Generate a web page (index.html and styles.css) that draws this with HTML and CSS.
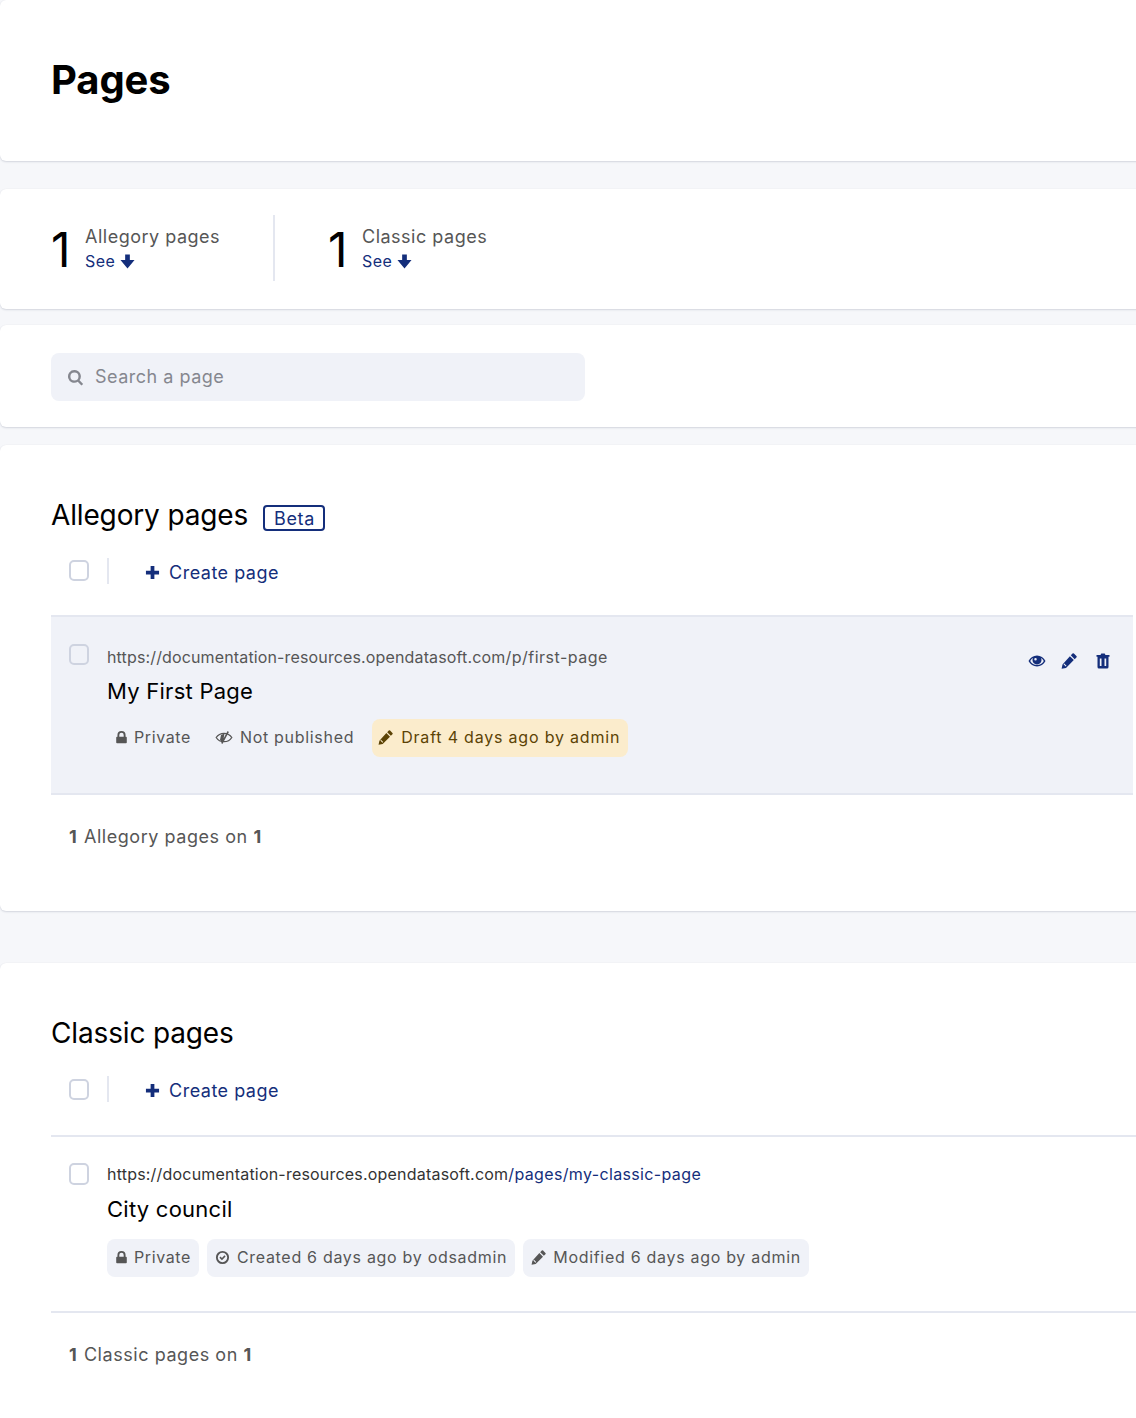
FILE: index.html
```html
<!DOCTYPE html>
<html lang="en">
<head>
    <meta charset="UTF-8">
    <title>Pages</title>
    <link rel="stylesheet" href="styles.css">
</head>
<body>
    <svg class="sprites" width="0" height="0">
        <symbol id="i-down" viewBox="0 0 16 16"><path d="M5.500.5h5v6h5L8 15.500.5 6.500h5z"/></symbol>
        <symbol id="i-plus" viewBox="0 0 16 16"><path d="M6 1h4v5h5v4h-5v5H6v-5H1V6h5z"/></symbol>
        <symbol id="i-search" viewBox="0 0 16 16"><path fill-rule="evenodd" d="M7 1a6 6 0 0 1 4.800 9.600l3.400 3.400-1.600 1.600-3.500-3.500A6 6 0 1 1 7 1zm0 2.200a3.800 3.800 0 1 0 0 7.600 3.800 3.800 0 0 0 0-7.600z"/></symbol>
        <symbol id="i-lock" viewBox="0 0 16 16"><path fill-rule="evenodd" d="M3 7V5a5 5 0 0 1 10 0v2h.5a1 1 0 0 1 1 1v6a1 1 0 0 1-1 1h-11a1 1 0 0 1-1-1V8a1 1 0 0 1 1-1zm2.300 0h5.400V5a2.700 2.700 0 0 0-5.400 0z"/></symbol>
        <symbol id="i-eye" viewBox="0 0 18 14"><path fill-rule="evenodd" d="M9 1.500c3.600 0 6.800 2.200 8.500 5.500-1.700 3.300-4.900 5.500-8.500 5.500S2.200 10.300.5 7C2.200 3.700 5.400 1.500 9 1.500zM5.100 3.700A8 8 0 0 0 2.200 7a7.800 7.800 0 0 0 13.600 0 8 8 0 0 0-2.900-3.300A4.500 4.500 0 1 1 5.100 3.700zM7.500 4a1 1 0 0 0 0 2.500 1.200 1.200 0 0 0 0-2.500z"/></symbol>
        <symbol id="i-eye-off" viewBox="0 0 18 14"><path fill="none" stroke="currentColor" stroke-width="1.300" d="M1.200 7C3 4.200 5.800 2.800 9 2.800s6 1.400 7.800 4.200C15 9.800 12.200 11.200 9 11.200S3 9.800 1.200 7z"/><path d="M6 4.500 9.500 3l-1 5.500-1.500 3-2-2zM12.600.6l1.300.8-6.500 12-1.300-.8z"/></symbol>
        <symbol id="i-pencil" viewBox="0 0 16 16"><path d="M11.500.6a1 1 0 0 1 1.400 0l2.500 2.500a1 1 0 0 1 0 1.400l-1.700 1.700-3.900-3.900zM8.900 3.200l3.900 3.900-7.800 7.800-4.400.9.900-4.400zM2.500 11.200l2.300 2.300.7-.7-2.300-2.300z"/></symbol>
        <symbol id="i-trash" viewBox="0 0 14 16"><path fill-rule="evenodd" d="M4.500 2 5.300.5h3.400L9.500 2H13.500v1.800h-1V14a1.500 1.500 0 0 1-1.500 1.500H3A1.500 1.500 0 0 1 1.500 14V3.800h-1V2zM3.800 5.500v7.500h1.700V5.500zm4.700 0v7.500h1.700V5.500z"/></symbol>
        <symbol id="i-check" viewBox="0 0 16 16"><path fill-rule="evenodd" d="M8 1a7 7 0 1 1 0 14A7 7 0 0 1 8 1zm0 2a5 5 0 1 0 0 10A5 5 0 0 0 8 3z"/><path d="M5.900 7 7.400 8.400 10.100 5.700l1.200 1.200-3.900 3.900L4.700 8.200z"/></symbol>
    </svg>

    <header class="card page-head">
        <h1>Pages</h1>
    </header>

    <section class="card stats">
        <div class="stat stat-first">
            <span class="stat-num">1</span>
            <div>
                <div class="stat-label">Allegory pages</div>
                <a class="stat-link" href="#allegory">See <svg class="icon"><use href="#i-down"/></svg></a>
            </div>
        </div>
        <div class="stat">
            <span class="stat-num">1</span>
            <div>
                <div class="stat-label">Classic pages</div>
                <a class="stat-link" href="#classic">See <svg class="icon"><use href="#i-down"/></svg></a>
            </div>
        </div>
    </section>

    <section class="card search-card">
        <div class="search">
            <svg class="icon"><use href="#i-search"/></svg>
            <span>Search a page</span>
        </div>
    </section>

    <section class="card list list-allegory" id="allegory">
        <div class="list-title">
            <h2>Allegory pages</h2>
            <span class="beta">Beta</span>
        </div>
        <div class="toolbar">
            <span class="checkbox"></span>
            <span class="toolbar-sep"></span>
            <a class="create" href="#"><svg class="icon"><use href="#i-plus"/></svg> Create page</a>
        </div>
        <div class="row row-active">
            <span class="checkbox row-check"></span>
            <div class="row-body">
                <div class="url"><span>https://documentation-resources.opendatasoft.com</span>/p/first-page</div>
                <div class="row-name">My First Page</div>
                <div class="tags">
                    <span class="tag tag-plain tag-private"><svg class="icon icon-lock"><use href="#i-lock"/></svg>Private</span>
                    <span class="tag tag-plain"><svg class="icon icon-wide"><use href="#i-eye-off"/></svg>Not published</span>
                    <span class="tag tag-draft"><svg class="icon"><use href="#i-pencil"/></svg>Draft 4 days ago by admin</span>
                </div>
            </div>
            <div class="row-actions">
                <svg class="icon icon-wide"><use href="#i-eye"/></svg>
                <svg class="icon"><use href="#i-pencil"/></svg>
                <svg class="icon"><use href="#i-trash"/></svg>
            </div>
        </div>
        <div class="count"><b>1</b> Allegory pages on <b>1</b></div>
    </section>

    <section class="card list list-classic" id="classic">
        <div class="list-title">
            <h2>Classic pages</h2>
        </div>
        <div class="toolbar">
            <span class="checkbox"></span>
            <span class="toolbar-sep"></span>
            <a class="create" href="#"><svg class="icon"><use href="#i-plus"/></svg> Create page</a>
        </div>
        <div class="row">
            <span class="checkbox row-check"></span>
            <div class="row-body">
                <div class="url url-dark"><span>https://documentation-resources.opendatasoft.com</span>/pages/my-classic-page</div>
                <div class="row-name">City council</div>
                <div class="tags">
                    <span class="tag tag-private"><svg class="icon icon-lock"><use href="#i-lock"/></svg>Private</span>
                    <span class="tag"><svg class="icon"><use href="#i-check"/></svg>Created 6 days ago by odsadmin</span>
                    <span class="tag"><svg class="icon"><use href="#i-pencil"/></svg>Modified 6 days ago by admin</span>
                </div>
            </div>
        </div>
        <div class="count"><b>1</b> Classic pages on <b>1</b></div>
    </section>
</body>
</html>
```

FILE: styles.css
```css
html, body {
    height: 1418px;
    overflow: hidden;
}
body {
    margin: 0;
    background-color: #f6f7fa;
    font-family: Inter, "Liberation Sans", sans-serif;
    color: #565656;
    letter-spacing: 0.5px;
}
.sprites {
    position: absolute;
}
.icon {
    width: 14px;
    height: 14px;
    fill: currentColor;
    flex: none;
}
.icon-wide {
    width: 18px;
}

.card {
    background-color: #fff;
    margin-right: -10px;
    border-radius: 6px;
    box-shadow: 0 1px 2px rgba(40, 50, 90, 0.16), 0 0 1px rgba(40, 50, 90, 0.08);
}
.page-head {
    height: 161px;
    box-sizing: border-box;
    padding: 56px 51px 0;
}
h1 {
    margin: 0;
    font-size: 40px;
    line-height: 48px;
    font-weight: 700;
    color: #000;
    letter-spacing: -0.1px;
}

.stats {
    margin-top: 28px;
    height: 120px;
    box-sizing: border-box;
    padding: 26px 51px;
    display: flex;
}
.stat {
    display: flex;
    align-items: center;
    gap: 14px;
    height: 66px;
}
.stat > div {
    padding-top: 2px;
}
.stat-first {
    width: 222px;
    border-right: 2px solid #e4e7f0;
    margin-right: 53px;
}
.stat-num {
    font-size: 48px;
    line-height: 66px;
    font-weight: 400;
    color: #000;
    letter-spacing: 0;
    width: 20px;
    padding-top: 3px;
}
.stat-label {
    font-size: 18px;
    line-height: 24px;
}
.stat-link {
    display: flex;
    align-items: center;
    gap: 5px;
    color: #142e7b;
    font-size: 16px;
    line-height: 24px;
    letter-spacing: 0.4px;
    text-decoration: none;
}
.stat-link .icon {
    width: 15px;
    height: 15px;
}

.search-card {
    margin-top: 16px;
    height: 102px;
    box-sizing: border-box;
    padding: 28px 51px;
}
.search {
    width: 534px;
    height: 48px;
    box-sizing: border-box;
    padding: 0 0 2px 16px;
    display: flex;
    align-items: center;
    gap: 11px;
    background-color: #f0f2f8;
    border-radius: 8px;
    color: #85878f;
    font-size: 18px;
}
.search .icon {
    width: 17px;
    height: 17px;
    margin-top: 2px;
}

.list {
    padding-left: 51px;
}
.list-allegory {
    margin-top: 18px;
    height: 466px;
    box-sizing: border-box;
    padding-top: 52px;
}
.list-classic {
    margin-top: 52px;
    height: 470px;
    box-sizing: border-box;
    padding-top: 52px;
}
.list-title {
    display: flex;
    align-items: center;
    gap: 15px;
    height: 36px;
}
h2 {
    margin: 0;
    font-size: 28px;
    line-height: 36px;
    font-weight: 400;
    color: #000;
    letter-spacing: -0.15px;
}
.beta {
    border: 2px solid #142e7b;
    border-radius: 4px;
    padding: 1px 8px 0 9px;
    font-size: 18px;
    line-height: 21px;
    letter-spacing: 0.6px;
    color: #142e7b;
    margin-top: 6px;
}
.toolbar {
    display: flex;
    align-items: center;
    height: 28px;
    margin-top: 24px;
    padding: 0 0 30px 18px;
}
.list-classic .toolbar {
    padding-bottom: 32px;
}
.list-allegory .toolbar .checkbox {
    margin-top: -2px;
}
.checkbox {
    display: block;
    width: 16px;
    height: 17px;
    border: 2px solid #ced3e0;
    border-radius: 5px;
    background-color: #fff;
    flex: none;
}
.toolbar-sep {
    width: 2px;
    height: 26px;
    margin: 0 36px 0 18px;
    background-color: #e4e7f0;
}
.create {
    display: flex;
    align-items: center;
    gap: 9px;
    color: #142e7b;
    font-size: 18px;
    text-decoration: none;
    margin-top: 3px;
}
.create .icon {
    width: 15px;
    height: 15px;
}

.row {
    display: flex;
    border-top: 2px solid #e4e7f0;
    border-bottom: 2px solid #e4e7f0;
    padding: 25px 0 0 18px;
    height: 178px;
    box-sizing: border-box;
    margin-right: 0;
}
.row-active {
    height: 180px;
    background-color: #f0f2f8;
    margin-right: 13px;
    padding-top: 28px;
}
.row-check {
    margin-right: 18px;
    height: 18px;
    margin-top: 1px;
}
.row-active .checkbox {
    background-color: #f0f2f8;
    height: 17px;
    margin-top: -1px;
}
.row-body {
    flex: 1;
}
.url {
    font-size: 16px;
    line-height: 24px;
    color: #565656;
}
.url span {
    letter-spacing: 0.14px;
}
.url-dark {
    color: #142e7b;
    letter-spacing: 0.36px;
}
.url-dark span {
    color: #333;
    letter-spacing: 0.2px;
}
.row-name {
    margin-top: 8px;
    font-size: 22px;
    line-height: 30px;
    color: #000;
    letter-spacing: 0.25px;
}
.row-active .row-name {
    margin-top: 7px;
}
.tags {
    display: flex;
    gap: 8px;
    margin-top: 15px;
}
.row-active .tags {
    margin-top: 13px;
}
.tag {
    display: flex;
    align-items: center;
    gap: 7px;
    height: 38px;
    box-sizing: border-box;
    padding: 0 8px 2px;
    background-color: #f0f2f8;
    border-radius: 8px;
    font-size: 16px;
    letter-spacing: 0.7px;
}
.tag .icon {
    width: 15px;
    height: 15px;
}
.tag-private {
    letter-spacing: 0.6px;
}
.tag .icon-lock {
    width: 13px;
    margin-right: -1px;
}
.tag .icon-wide {
    width: 18px;
}
.tag-plain {
    background: none;
}
.tag-draft {
    background-color: #fbeccc;
    color: #5c4305;
    gap: 8px;
    padding-left: 6px;
    margin-left: 2px;
    letter-spacing: 0.8px;
}
.row-actions {
    display: flex;
    gap: 15px;
    padding: 8px 22px 0 0;
    color: #142e7b;
}
.row-actions .icon {
    width: 16px;
    height: 16px;
}
.row-actions .icon-wide {
    width: 18px;
}
.row-actions .icon:last-child {
    margin-left: 3px;
}
.count {
    padding: 30px 0 0 18px;
    font-size: 18px;
    line-height: 24px;
    letter-spacing: 0.55px;
}
.count b {
    font-weight: 700;
    margin-right: 1px;
}
```
